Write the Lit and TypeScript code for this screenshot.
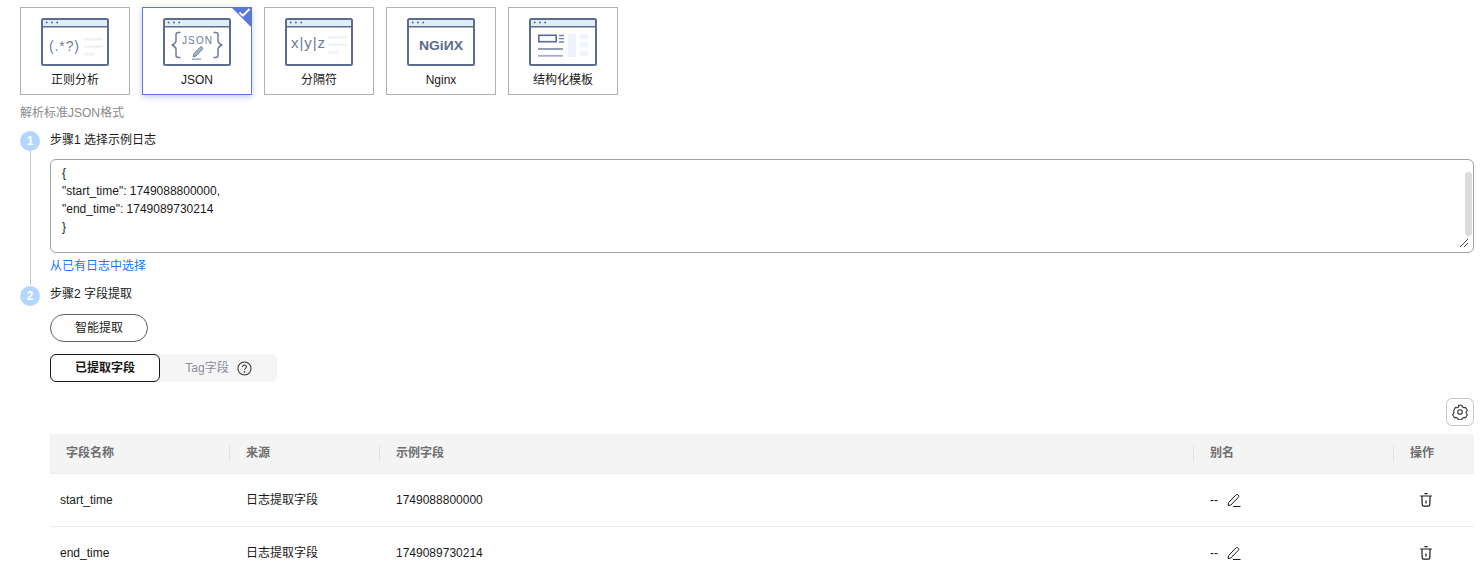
import { LitElement, html, css, svg } from "lit";
import { customElement } from "lit/decorators.js";

const S = "#5a6c8f";
const frame = svg`
  <rect x="1" y="1" width="66" height="46" rx="1.5" fill="#fff" stroke="${S}" stroke-width="2"/>
  <rect x="2" y="2" width="64" height="6.5" fill="#e1eefa"/>
  <path d="M1 8.8H67" stroke="${S}" stroke-width="1.6"/>
  <g fill="${S}"><circle cx="5.7" cy="4.6" r="1"/><circle cx="10.9" cy="4.6" r="1"/><circle cx="16.2" cy="4.6" r="1"/></g>`;
const bars = (y: number) => svg`<g fill="#eef2fa">
  <rect x="43" y="${y}" width="19" height="2.6"/><rect x="43" y="${y + 7.4}" width="19" height="2.6"/><rect x="43" y="${y + 15}" width="10" height="2.6"/></g>`;

const icons = [
  svg`${frame}${bars(20)}<text class="g" x="8" y="33" font-size="14" textLength="30" lengthAdjust="spacing">(.*?)</text>`,
  svg`${frame}
    <path d="M17.5 14.5h-2.2c-1.5 0-2.3.8-2.3 2.2v6.2c0 1.5-1 2.4-3.6 4.1 2.6 1.7 3.6 2.6 3.6 4.1v6.2c0 1.4.8 2.2 2.3 2.2h2.2M50.5 14.5h2.2c1.5 0 2.3.8 2.3 2.2v6.2c0 1.5 1 2.4 3.6 4.1-2.6 1.7-3.6 2.6-3.6 4.1v6.2c0 1.4-.8 2.2-2.3 2.2h-2.2" fill="none" stroke="#6b7c9c" stroke-width="1.5"/>
    <text class="g" x="19" y="25.5" font-size="10" textLength="30" lengthAdjust="spacing">JSON</text>
    <path d="M30.2 39l.8-3.4 6-6.2c.7-.7 1.6-.7 2.2 0 .6.6.6 1.5 0 2.1l-6 6.3z" fill="#a9b4c9" stroke="#6b7c9c" stroke-width="1"/>
    <path d="M29 41.2h9" stroke="#a3aec2" stroke-width="1.6"/>`,
  svg`${frame}${bars(18)}<text class="g" x="6" y="30" font-size="15" textLength="34" lengthAdjust="spacing">x|y|z</text>`,
  svg`${frame}<text class="n" x="12" y="32" font-size="12.5" font-weight="700" textLength="44" lengthAdjust="spacingAndGlyphs">NGiИX</text>`,
  svg`${frame}
    <rect x="9.8" y="17.3" width="17.4" height="6.4" fill="none" stroke="${S}" stroke-width="1.6"/>
    <path d="M30 17.5h5M30 20.7h5M30 24h5M9 31h25" stroke="#6f7f9e" stroke-width="1.3" fill="none"/>
    <path d="M9 37.8h25" stroke="#a3aec2" stroke-width="1.8"/>
    <g fill="#eef2fa"><rect x="39" y="16" width="8" height="23"/><rect x="51" y="16" width="8" height="5"/><rect x="51" y="24.5" width="8" height="5"/><rect x="51" y="33" width="8" height="5"/></g>`,
];
const types = ["正则分析", "JSON", "分隔符", "Nginx", "结构化模板"];

const pencil = html`<svg class="ic" viewBox="0 0 16 16" fill="none" stroke="#191919" stroke-width="1"><path d="M2.6 10.6l7.2-7.6c.7-.7 1.7-.7 2.4 0 .7.7.7 1.7 0 2.4l-7.4 7.7-2.8.4z"/><path d="M7 14.5h7.5"/></svg>`;
const trash = html`<svg class="ic" viewBox="0 0 16 16" fill="none" stroke="#191919" stroke-width="1.2"><path d="M2.2 4h11.6M6.5 1.7h3M3.9 4l.3 8.5c0 1 .6 1.6 1.6 1.6h4.4c1 0 1.6-.6 1.6-1.6l.3-8.5"/><path d="M8 8.5v3"/></svg>`;

@customElement("app-root")
export class AppRoot extends LitElement {
  static styles = css`
    :host {
      display: block;
      height: 100vh;
      overflow: hidden;
      box-sizing: border-box;
      padding: 7px 8px 0 20px;
      font: 12px/18px "Liberation Sans", "Noto Sans CJK SC", sans-serif;
      color: #191919;
      background: #fff;
    }
    .types { display: flex; gap: 12px; }
    .card {
      position: relative;
      box-sizing: border-box;
      width: 110px;
      height: 88px;
      border: 1px solid #adb0b8;
      display: flex;
      flex-direction: column;
      align-items: center;
      padding-top: 10px;
      overflow: hidden;
    }
    .card.on { border-color: #5a78dc; box-shadow: 0 2px 6px rgba(82, 110, 204, .35); overflow: visible; }
    .card svg.art { width: 68px; height: 48px; display: block; }
    .art text { font-family: "Liberation Sans", sans-serif; }
    .art .g { fill: #6b7c9c; }
    .art .n { fill: #5a6c8f; }
    .card .name { margin-top: 5px; line-height: 18px; }
    .corner { position: absolute; right: -1px; top: -1px; width: 21px; height: 21px; display: block; }
    .hint { color: #8a8a8a; margin-top: 9px; height: 18px; }
    .step { display: flex; gap: 10px; }
    .rail { width: 20px; flex: none; display: flex; flex-direction: column; align-items: center; }
    .num {
      width: 20px; height: 20px; border-radius: 50%; background: #b3d6ff; color: #fff;
      font-weight: 700; text-align: center; line-height: 20px; flex: none;
    }
    .s2 .num { margin-top: 1px; }
    .bar { width: 1px; flex: 1; background: #c4c6cc; }
    .body { flex: 1; min-width: 0; }
    .title { line-height: 18px; padding-bottom: 2px; }
    .s1 { margin-top: 9px; }
    .s1 .body { padding-bottom: 10px; }
    .area { position: relative; margin-top: 8px; height: 94px; }
    textarea {
      display: block;
      box-sizing: border-box;
      width: 100%;
      height: 94px;
      border: 1px solid #a0a0a0;
      border-radius: 6px;
      padding: 4px 11px;
      font: inherit;
      line-height: 18px;
      color: #191919;
      outline: none;
      resize: none;
      overflow: hidden;
    }
    .thumb { position: absolute; right: 2px; top: 13px; width: 7px; height: 64px; border-radius: 4px; background: #dcdcdc; }
    .grip { position: absolute; right: 5px; bottom: 5px; width: 10px; height: 10px; display: block; }
    .link { color: #1476ff; margin-top: 4px; line-height: 18px; }
    .pill {
      display: block; box-sizing: border-box; width: 98px; height: 28px; margin-top: 9px;
      border: 1px solid #5e5e5e; border-radius: 14px; background: #fff; color: #191919;
      font: inherit; padding: 0; text-align: center;
    }
    .tabs { display: flex; width: 227px; height: 28px; margin-top: 12px; background: #f5f5f5; border-radius: 6px; }
    .tab {
      box-sizing: border-box; width: 110px; display: flex; align-items: center; justify-content: center;
      border: 1px solid #191919; border-radius: 6px; background: #fff; font-weight: 700;
    }
    .tab.off { border: 0; background: none; color: #8a8e99; font-weight: 400; width: 117px; gap: 8px; }
    .help { width: 15px; height: 15px; display: block; }
    .tools { display: flex; justify-content: flex-end; margin-top: 16px; }
    .gear {
      box-sizing: border-box; width: 28px; height: 28px; border: 1px solid #c4c6cc; border-radius: 6px;
      display: flex; align-items: center; justify-content: center;
    }
    .gear svg { width: 16px; height: 16px; display: block; }
    .table { margin-top: 8px; display: grid; grid-template-columns: 180px 150px 814px 200px 80px; }
    .th {
      height: 40px; box-sizing: border-box; background: #f4f4f4; border-bottom: 1px solid #ececec;
      display: flex; align-items: center; color: #6e6e6e; font-weight: 700; padding-bottom: 1px;
    }
    .th span { display: block; margin-left: -1px; padding-left: 16px; border-left: 1px solid #dfe1e6; line-height: 16px; }
    .th:first-child span { margin-left: 0; border-left: 0; }
    .td {
      height: 53px; box-sizing: border-box; border-bottom: 1px solid #ececec;
      display: flex; align-items: center; padding: 0 0 1px 16px; gap: 8px;
    }
    .td.first { padding-left: 10px; }
    .td.ops { padding-left: 24px; }
    .ic { width: 16px; height: 16px; display: block; flex: none; }
  `;

  render() {
    const rows = [
      ["start_time", "1749088800000"],
      ["end_time", "1749089730214"],
    ];
    return html`
      <div class="types">
        ${types.map(
          (t, i) => html`<div class="card ${i === 1 ? "on" : ""}">
            <svg class="art" viewBox="0 0 68 48">${icons[i]}</svg>
            <div class="name">${t}</div>
            ${i === 1
              ? html`<svg class="corner" viewBox="0 0 21 21"><path d="M0 0H21V21z" fill="#5a78dc"/><path d="M8.5 5.5l3.4 3.2L18.6 2" fill="none" stroke="#fff" stroke-width="2"/></svg>`
              : ""}
          </div>`
        )}
      </div>
      <div class="hint">解析标准JSON格式</div>
      <div class="step s1">
        <div class="rail"><div class="num">1</div><div class="bar"></div></div>
        <div class="body">
          <div class="title">步骤1 选择示例日志</div>
          <div class="area">
            <textarea .value=${'{\n"start_time": 1749088800000,\n"end_time": 1749089730214\n}'}></textarea>
            <div class="thumb"></div>
            <svg class="grip" viewBox="0 0 10 10" stroke="#444" stroke-width="1" fill="none"><path d="M1 9L9 1M5 9L9 5"/></svg>
          </div>
          <div class="link">从已有日志中选择</div>
        </div>
      </div>
      <div class="step s2">
        <div class="rail"><div class="num">2</div></div>
        <div class="body">
          <div class="title">步骤2 字段提取</div>
          <button class="pill">智能提取</button>
          <div class="tabs">
            <div class="tab">已提取字段</div>
            <div class="tab off">Tag字段
              <svg class="help" viewBox="0 0 16 16" fill="none" stroke="#333" stroke-width="1.1"><circle cx="8" cy="8" r="7"/><path d="M5.9 6.3c0-1.2 1-2 2.1-2s2.1.8 2.1 1.9c0 1.6-2.1 1.6-2.1 3.2"/><circle cx="8" cy="11.5" r=".4"/></svg>
            </div>
          </div>
          <div class="tools"><div class="gear">
            <svg viewBox="0 0 16 16" fill="none" stroke="#333" stroke-width="1.1" stroke-linejoin="round"><path d="M6.3 1.6h3.4l.6 1.6 1.6.9 1.7-.3 1.7 3-1.1 1.2v1.9l1.1 1.2-1.7 3-1.7-.3-1.6.9-.6 1.6H6.3l-.6-1.6-1.6-.9-1.7.3-1.7-3 1.1-1.2V7.8L1.7 6.8l1.7-3 1.7.3 1.6-.9z" transform="translate(0 -.4)"/><circle cx="8" cy="8" r="2.3"/></svg>
          </div></div>
          <div class="table">
            ${["字段名称", "来源", "示例字段", "别名", "操作"].map((h) => html`<div class="th"><span>${h}</span></div>`)}
            ${rows.map(
              ([n, v]) => html`
                <div class="td first">${n}</div>
                <div class="td">日志提取字段</div>
                <div class="td">${v}</div>
                <div class="td">--${pencil}</div>
                <div class="td ops">${trash}</div>`
            )}
          </div>
        </div>
      </div>
    `;
  }
}
